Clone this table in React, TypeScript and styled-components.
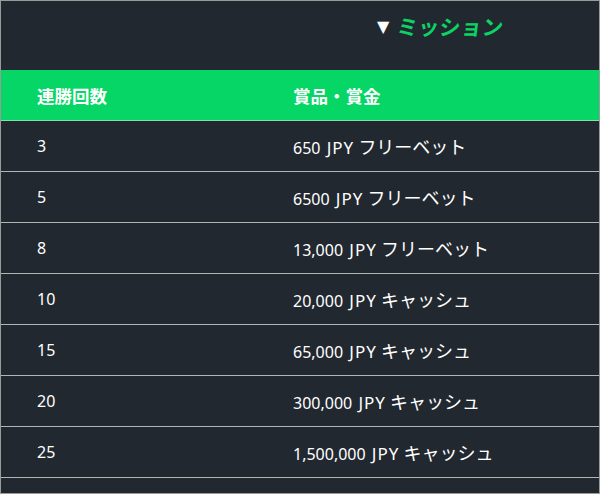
import React from 'react';
import styled, { createGlobalStyle } from 'styled-components';

const GlobalStyle = createGlobalStyle`
  html, body {
    margin: 0;
    padding: 0;
    background: #22282f;
  }
  body {
    font-family: "Noto Sans", "Noto Sans CJK JP", sans-serif;
  }
`;

const Frame = styled.div`
  box-sizing: border-box;
  width: 600px;
  height: 494px;
  border: 1px solid #9a9a9a;
  background: #22282f;
  overflow: hidden;
`;

const TitleBar = styled.div`
  height: 69px;
  display: flex;
  align-items: flex-start;
  padding-left: 376px;
  padding-top: 11px;
  box-sizing: border-box;
`;

const Title = styled.h2`
  margin: 0;
  display: flex;
  align-items: center;
  gap: 8px;
  font-size: 21px;
  font-weight: 700;
  line-height: 30px;
  color: #0bd464;
`;

const Arrow = styled.span`
  color: #ffffff;
  font-size: 16px;
  font-family: "DejaVu Sans", sans-serif;
`;

const Slanted = styled.span`
  display: inline-block;
  transform: skewX(-7deg);
  letter-spacing: 0.3px;
`;

const Table = styled.table`
  width: 100%;
  border-collapse: collapse;
  color: #ffffff;
  font-size: 16px;
`;

const HeadCell = styled.th`
  background: #06d665;
  height: 50px;
  padding: 0 0 0 36px;
  text-align: left;
  font-weight: 700;
  font-size: 17.5px;
  border-bottom: 1px solid #7fe3a8;
`;

const Row = styled.tr`
  border-bottom: 1px solid #b4b4b4;
`;

const Cell = styled.td<{ $first?: boolean }>`
  height: 50px;
  padding: 0 0 0 36px;
  width: ${(p) => (p.$first ? '220px' : 'auto')};
  font-weight: 400;
  font-size: 16px;
  white-space: nowrap;
`;

const Unit = styled.span`
  display: inline-block;
  margin-left: 2px;
  font-size: 17px;
  letter-spacing: 1px;
`;

const Kind = styled.span`
  font-family: "Noto Sans CJK JP", sans-serif;
  font-size: 18px;
`;

const rows = [
  ['3', '650', 'フリーベット'],
  ['5', '6500', 'フリーベット'],
  ['8', '13,000', 'フリーベット'],
  ['10', '20,000', 'キャッシュ'],
  ['15', '65,000', 'キャッシュ'],
  ['20', '300,000', 'キャッシュ'],
  ['25', '1,500,000', 'キャッシュ'],
];

const App: React.FC = () => (
  <>
    <GlobalStyle />
    <Frame>
      <TitleBar>
        <Title>
          <Arrow>▼</Arrow>
          <Slanted>ミッション</Slanted>
        </Title>
      </TitleBar>
      <Table>
        <thead>
          <tr>
            <HeadCell>連勝回数</HeadCell>
            <HeadCell>賞品・賞金</HeadCell>
          </tr>
        </thead>
        <tbody>
          {rows.map(([n, amount, kind]) => (
            <Row key={n}>
              <Cell $first>{n}</Cell>
              <Cell>
                {amount} <Unit>JPY</Unit> <Kind>{kind}</Kind>
              </Cell>
            </Row>
          ))}
        </tbody>
      </Table>
    </Frame>
  </>
);

export default App;
